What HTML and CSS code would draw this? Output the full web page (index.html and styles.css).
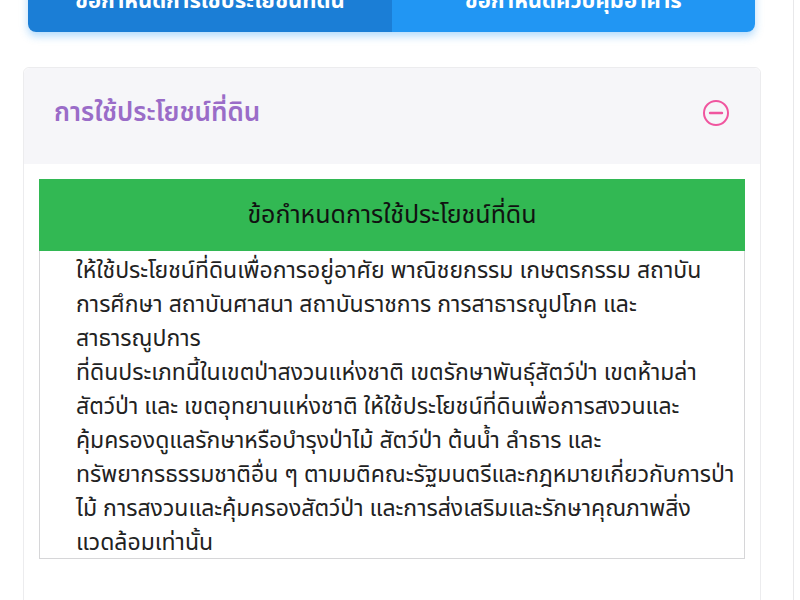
FILE: index.html
```html
<!DOCTYPE html>
<html lang="th">
  <head>
    <meta charset="UTF-8" />
    <meta name="viewport" content="width=device-width, initial-scale=1.0" />
    <title>ข้อกำหนดการใช้ประโยชน์ที่ดิน</title>
    <link rel="stylesheet" href="styles.css">
  </head>
  <body>
    <div class="page">
      <div class="tabs">
        <button class="tab active">ข้อกำหนดการใช้ประโยชน์ที่ดิน</button>
        <button class="tab">ข้อกำหนดควบคุมอาคาร</button>
      </div>

      <div class="card">
        <div class="card-header">
          <span class="card-title">การใช้ประโยชน์ที่ดิน</span>
          <svg class="toggle" width="30" height="30" viewBox="0 0 30 30">
            <circle cx="15" cy="15" r="12" fill="none" stroke="#f0559f" stroke-width="2" />
            <line x1="9" y1="15" x2="21" y2="15" stroke="#f0559f" stroke-width="2.4" stroke-linecap="round" />
          </svg>
        </div>
        <div class="card-body">
          <table class="rule-table">
            <thead>
              <tr><th>ข้อกำหนดการใช้ประโยชน์ที่ดิน</th></tr>
            </thead>
            <tbody>
              <tr>
                <td>
                  <p>ให้ใช้ประโยชน์ที่ดินเพื่อการอยู่อาศัย พาณิชยกรรม เกษตรกรรม สถาบัน<br>การศึกษา สถาบันศาสนา สถาบันราชการ การสาธารณูปโภค และ<br>สาธารณูปการ</p>
                  <p>ที่ดินประเภทนี้ในเขตป่าสงวนแห่งชาติ เขตรักษาพันธุ์สัตว์ป่า เขตห้ามล่า<br>สัตว์ป่า และ เขตอุทยานแห่งชาติ ให้ใช้ประโยชน์ที่ดินเพื่อการสงวนและ<br>คุ้มครองดูแลรักษาหรือบำรุงป่าไม้ สัตว์ป่า ต้นน้ำ ลำธาร และ<br>ทรัพยากรธรรมชาติอื่น ๆ ตามมติคณะรัฐมนตรีและกฎหมายเกี่ยวกับการป่า<br>ไม้ การสงวนและคุ้มครองสัตว์ป่า และการส่งเสริมและรักษาคุณภาพสิ่ง<br>แวดล้อมเท่านั้น</p>
                </td>
              </tr>
            </tbody>
          </table>
        </div>
      </div>
    </div>
  </body>
</html>
```

FILE: styles.css
```css
body {
  margin: 0;
  background-color: #fff;
  font-family: "Noto Sans", "Noto Sans Thai", sans-serif;
  color: #222;
  overflow: hidden;
}

.page {
  width: 794px;
  min-height: 660px;
  padding-top: 1px;
  margin-top: -31px;
  box-sizing: border-box;
  border-right: 1px solid #e8e8ea;
}

.tabs {
  display: flex;
  margin: 0 38px 0 28px;
  height: 62px;
  border-radius: 0 0 8px 8px;
  overflow: hidden;
  box-shadow: 0 4px 8px rgba(33, 150, 243, 0.35);
}

.tab {
  flex: 1;
  border: none;
  background-color: #2196f3;
  color: #fff;
  font-family: inherit;
  font-size: 22px;
  font-weight: bold;
  cursor: pointer;
}

.tab.active {
  background-color: #1b7ed6;
}

.card {
  margin: 35px 32px 0 23px;
  border: 1px solid #ececee;
  border-radius: 6px;
  height: 580px;
}

.card-header {
  display: flex;
  justify-content: space-between;
  align-items: center;
  height: 96px;
  padding: 0 29px 7px 30px;
  box-sizing: border-box;
  background-color: #f6f6f9;
  border-radius: 6px 6px 0 0;
}

.card-title {
  font-size: 26px;
  font-weight: 600;
  color: #9a6cc8;
}

.toggle {
  display: block;
}

.card-body {
  padding: 15px 15px;
}

.rule-table {
  width: 100%;
  border-collapse: collapse;
}

.rule-table th {
  height: 70px;
  padding: 0;
  background-color: #32b853;
  border: 1px solid #32b853;
  color: #111;
  font-size: 25px;
  font-weight: normal;
}

.rule-table td {
  border: 1px solid #d6d6d8;
  padding: 1px 4px 0 36px;
  font-size: 23px;
  line-height: 34px;
  color: #222;
}

.rule-table p {
  margin: 0;
  white-space: nowrap;
}
```
